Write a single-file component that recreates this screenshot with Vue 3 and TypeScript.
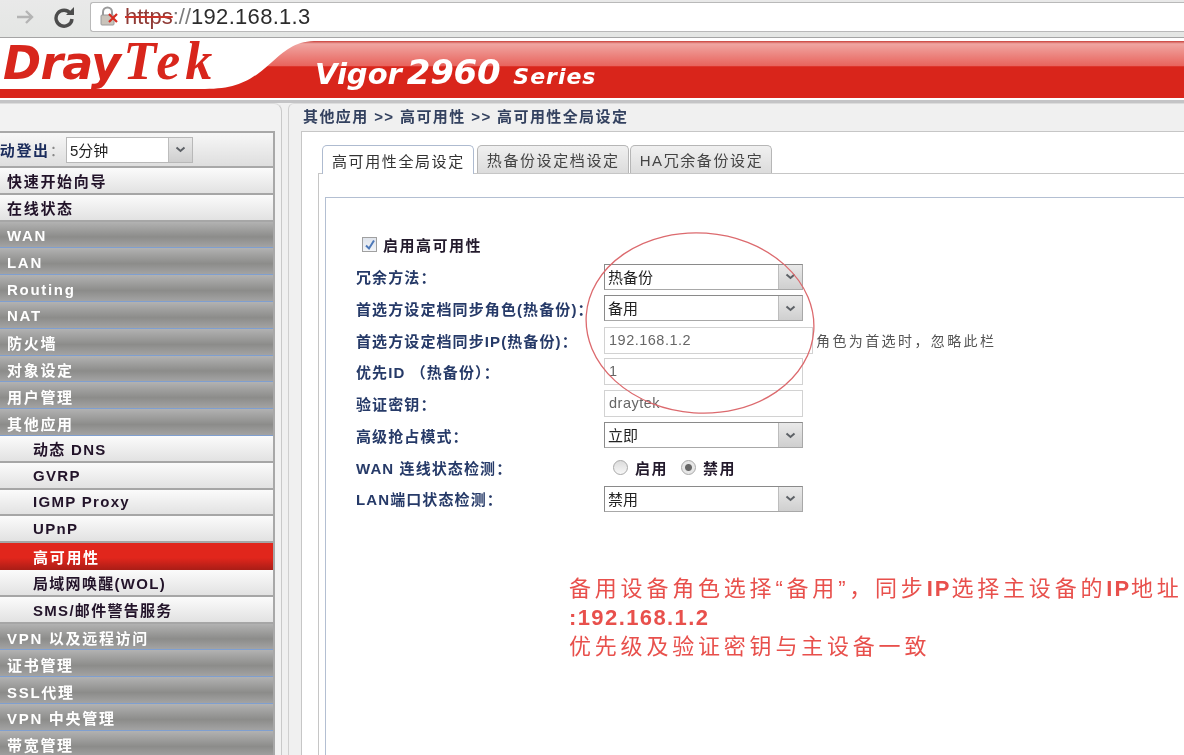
<script setup lang="ts">
interface MenuItem {
  label: string
  kind: 'light' | 'group' | 'sub' | 'active'
}

interface FormRow {
  label: string
  type: 'select' | 'input' | 'radio'
  value?: string
  wide?: boolean
  note?: string
}

const menu: MenuItem[] = [
  { label: '快速开始向导', kind: 'light' },
  { label: '在线状态', kind: 'light' },
  { label: 'WAN', kind: 'group' },
  { label: 'LAN', kind: 'group' },
  { label: 'Routing', kind: 'group' },
  { label: 'NAT', kind: 'group' },
  { label: '防火墙', kind: 'group' },
  { label: '对象设定', kind: 'group' },
  { label: '用户管理', kind: 'group' },
  { label: '其他应用', kind: 'group' },
  { label: '动态 DNS', kind: 'sub' },
  { label: 'GVRP', kind: 'sub' },
  { label: 'IGMP Proxy', kind: 'sub' },
  { label: 'UPnP', kind: 'sub' },
  { label: '高可用性', kind: 'active' },
  { label: '局域网唤醒(WOL)', kind: 'sub' },
  { label: 'SMS/邮件警告服务', kind: 'sub' },
  { label: 'VPN 以及远程访问', kind: 'group' },
  { label: '证书管理', kind: 'group' },
  { label: 'SSL代理', kind: 'group' },
  { label: 'VPN 中央管理', kind: 'group' },
  { label: '带宽管理', kind: 'group' }
]

const tabs = ['高可用性全局设定', '热备份设定档设定', 'HA冗余备份设定']

const rows: FormRow[] = [
  { label: '冗余方法：', type: 'select', value: '热备份' },
  { label: '首选方设定档同步角色(热备份)：', type: 'select', value: '备用' },
  { label: '首选方设定档同步IP(热备份)：', type: 'input', value: '192.168.1.2', wide: true, note: '角色为首选时，忽略此栏' },
  { label: '优先ID （热备份）：', type: 'input', value: '1' },
  { label: '验证密钥：', type: 'input', value: 'draytek' },
  { label: '高级抢占模式：', type: 'select', value: '立即' },
  { label: 'WAN 连线状态检测：', type: 'radio' },
  { label: 'LAN端口状态检测：', type: 'select', value: '禁用' }
]
</script>

<template>
  <div class="page">
    <div class="browser-bar">
      <svg class="nav-icon" width="24" height="24" viewBox="0 0 24 24">
        <path d="M4 12h15M13 6l6 6-6 6" fill="none" stroke="#b4b4b4" stroke-width="2.4" />
      </svg>
      <svg class="nav-icon reload" width="24" height="24" viewBox="0 0 24 24">
        <path d="M18.5 8.5A8 8 0 1 0 20 14" fill="none" stroke="#4c4c4c" stroke-width="3.4" />
        <path d="M14 10h8V2z" fill="#4c4c4c" />
      </svg>
      <div class="address">
        <svg class="lock" width="24" height="22" viewBox="0 0 24 22">
          <path d="M3 9V6a4.500 4.500 0 0 1 9 0v3" fill="none" stroke="#9a9a9a" stroke-width="2" />
          <rect x="1" y="9" width="13" height="10" rx="1" fill="#c9c3ba" stroke="#9a9a9a" />
          <path d="M9 8l8 8M17 8l-8 8" stroke="#d62b20" stroke-width="2.200" />
        </svg>
        <span class="scheme">https</span><span class="url-rest">://</span><span class="url-host">192.168.1.3</span>
      </div>
    </div>

    <header class="banner">
      <svg class="banner-shape" width="1184" height="62" viewBox="0 0 1184 62" preserveAspectRatio="none">
        <defs>
          <linearGradient id="gloss" x1="0" y1="0" x2="0" y2="1" gradientUnits="objectBoundingBox">
            <stop offset="0" stop-color="#c8403a" />
            <stop offset="0.05" stop-color="#f0a6a2" />
            <stop offset="0.44" stop-color="#e8635c" />
            <stop offset="0.45" stop-color="#d9251b" />
            <stop offset="1" stop-color="#d9251b" />
          </linearGradient>
        </defs>
        <path d="M318 3C296 3 288 10 272 24C252 42 238 51 205 51H0V60H1184V3Z" fill="url(#gloss)" />
      </svg>
      <div class="logo"><span class="dray">Dray</span><span class="tek">Tek</span></div>
      <div class="model"><span class="vigor">Vigor</span><span class="number">2960</span><span class="series">Series</span></div>
    </header>

    <div class="workspace">
      <aside class="sidebar">
        <nav class="menu">
          <div class="logout">
            <span class="logout-label">自动登出<i>：</i></span>
            <div class="select logout-select">
              <span class="select-value">5分钟</span>
              <span class="select-arrow">
                <svg width="11" height="7" viewBox="0 0 11 7"><path d="M1.500 1.500l4 3.500 4-3.500" fill="none" stroke="#5d6166" stroke-width="2" /></svg>
              </span>
            </div>
          </div>
          <div v-for="item in menu" :key="item.label" class="menu-item" :class="item.kind">{{ item.label }}</div>
        </nav>
      </aside>

      <main class="main">
        <div class="crumb">其他应用 &gt;&gt; 高可用性 &gt;&gt; 高可用性全局设定</div>
        <div class="sheet">
          <div class="tabs">
            <div v-for="(tab, i) in tabs" :key="tab" class="tab" :class="{ current: i === 0 }">{{ tab }}</div>
          </div>
          <div class="tab-panel">
            <div class="form-box">
              <div class="form">
                <label class="enable">
                  <span class="checkbox">
                    <svg width="12" height="12" viewBox="0 0 12 12"><path d="M2 6.500l3 3 5-8" fill="none" stroke="#4d78b8" stroke-width="2" /></svg>
                  </span>
                  启用高可用性
                </label>
                <template v-for="row in rows" :key="row.label">
                  <div class="field-label">{{ row.label }}</div>
                  <div class="field">
                    <div v-if="row.type === 'select'" class="select">
                      <span class="select-value">{{ row.value }}</span>
                      <span class="select-arrow">
                        <svg width="11" height="7" viewBox="0 0 11 7"><path d="M1.500 1.500l4 3.500 4-3.500" fill="none" stroke="#5d6166" stroke-width="2" /></svg>
                      </span>
                    </div>
                    <div v-else-if="row.type === 'input'" class="text-input" :class="{ wide: row.wide }">{{ row.value }}</div>
                    <div v-else class="radios">
                      <span class="radio"></span><b>启用</b>
                      <span class="radio on"></span><b>禁用</b>
                    </div>
                    <span v-if="row.note" class="note">{{ row.note }}</span>
                  </div>
                </template>
              </div>
              <div class="remark">
                <p>备用设备角色选择“备用”，同步<b>IP</b>选择主设备的<b>IP</b>地址</p>
                <p class="remark-ip">:192.168.1.2</p>
                <p>优先级及验证密钥与主设备一致</p>
              </div>
            </div>
          </div>
        </div>
      </main>
    </div>

    <svg class="circle-mark" width="240" height="192" viewBox="0 0 240 192">
      <ellipse cx="120" cy="96" rx="114" ry="90" fill="none" stroke="#dc6a6e" stroke-width="1.300" transform="rotate(4 120 96)" />
    </svg>
  </div>
</template>

<style>
html,
body {
  margin: 0;
  overflow: hidden;
  background: #f0f0f0;
}
</style>

<style scoped>
.page {
  position: relative;
  width: 1184px;
  height: 755px;
  overflow: hidden;
  display: flex;
  flex-direction: column;
  background: #f0f0f0;
  color: #222;
  font-family: "Liberation Sans", "Noto Sans CJK SC", sans-serif;
  filter: blur(0.35px);
}

.browser-bar {
  height: 38px;
  flex: none;
  box-sizing: border-box;
  display: flex;
  align-items: flex-start;
  padding-top: 2px;
  background: linear-gradient(#e9e9e9, #e4e6e4);
  border-bottom: 1px solid #a5a5a5;
}

.nav-icon {
  margin: 3px 0 0 13px;
  flex: none;
}

.nav-icon.reload {
  margin-left: 15px;
}

.address {
  flex: 1;
  height: 30px;
  margin-left: 14px;
  box-sizing: border-box;
  display: flex;
  align-items: center;
  padding-left: 9px;
  background: #fff;
  border: 1px solid #b9b9b9;
  border-right: 0;
  border-radius: 3px 0 0 3px;
  font-size: 22px;
}

.lock {
  flex: none;
  margin-right: 1px;
}

.scheme {
  color: #8f3a35;
  text-decoration: line-through;
  text-decoration-color: #c9352c;
}

.url-rest {
  color: #7c7c7c;
}

.url-host {
  color: #2c2c2c;
  letter-spacing: 0.3px;
}

.banner {
  position: relative;
  height: 62px;
  flex: none;
  background: #fff;
  border-bottom: 3px solid #c4c4c6;
  box-sizing: content-box;
}

.banner-shape {
  position: absolute;
  left: 0;
  top: 0;
}

.logo {
  position: absolute;
  left: 3px;
  top: -2px;
  line-height: 50px;
  white-space: nowrap;
  color: #d8261c;
}

.dray {
  font-family: "DejaVu Sans", sans-serif;
  font-weight: 700;
  font-style: italic;
  font-size: 46px;
  letter-spacing: -0.8px;
}

.tek {
  margin-left: 3px;
  font-family: "Liberation Serif", serif;
  font-style: italic;
  font-weight: 700;
  font-size: 54px;
  letter-spacing: 5px;
}

.model {
  position: absolute;
  left: 315px;
  top: 14px;
  display: flex;
  align-items: baseline;
  color: #fff;
  font-family: "DejaVu Sans", sans-serif;
  font-weight: 700;
  font-style: italic;
  white-space: nowrap;
}

.vigor {
  font-size: 29px;
}

.number {
  margin-left: 5px;
  font-size: 34px;
  letter-spacing: -0.3px;
}

.series {
  margin-left: 13px;
  font-size: 22px;
  letter-spacing: 1px;
}

.workspace {
  flex: 1;
  min-height: 0;
  display: flex;
}

.sidebar {
  width: 282px;
  flex: none;
  box-sizing: border-box;
  padding-top: 27px;
  overflow: hidden;
  background: #f2f2f2;
  border-right: 1px solid #c9c9c9;
  border-top: 1px solid #dcdcdc;
  border-top-right-radius: 8px;
}

.menu {
  width: 275px;
  box-sizing: border-box;
  border-right: 2px solid #a8a8a8;
  border-top: 2px solid #a8a8a8;
}

.logout {
  height: 35px;
  box-sizing: border-box;
  display: flex;
  align-items: center;
  border-bottom: 2px solid #a8a8a8;
  background: linear-gradient(#f7f7f7, #dedede);
}

.logout-label {
  margin-left: -17px;
  width: 83px;
  flex: none;
  font-size: 15px;
  font-weight: 700;
  letter-spacing: 1.7px;
  color: #1b2c5c;
  white-space: nowrap;
}

.logout-label i {
  font-style: normal;
  font-weight: 400;
  color: #888;
}

.menu-item {
  height: 26.8px;
  box-sizing: border-box;
  padding-left: 7px;
  display: flex;
  align-items: center;
  font-size: 15px;
  font-weight: 700;
  letter-spacing: 1.7px;
  white-space: nowrap;
}

.menu-item.light,
.menu-item.sub {
  color: #221329;
  background: linear-gradient(#fbfbfb, #e2e2e2);
  border-bottom: 2px solid #a6a6a6;
}

.menu-item.sub {
  padding-left: 33px;
  letter-spacing: 1.3px;
}

.menu-item.group {
  padding-top: 2px;
  color: #fff;
  background: linear-gradient(#b2b2b2, #8c8c8a 60%, #a3a3a3);
  border-bottom: 1px solid #7f9fd0;
}

.menu-item.active {
  padding-left: 33px;
  color: #fff;
  background: linear-gradient(#e1261c 55%, #a91d16);
}

.main {
  flex: 1;
  min-width: 0;
  margin-left: 6px;
  box-sizing: border-box;
  display: flex;
  flex-direction: column;
  background: #f0f0f0;
  border-left: 1px solid #cfcfcf;
  border-top: 1px solid #dcdcdc;
  border-top-left-radius: 6px;
}

.crumb {
  height: 27px;
  flex: none;
  box-sizing: border-box;
  padding: 0 0 4px 14px;
  display: flex;
  align-items: center;
  font-size: 15px;
  font-weight: 700;
  color: #33415f;
  letter-spacing: 1.4px;
  white-space: nowrap;
}

.sheet {
  flex: 1;
  margin-left: 12px;
  display: flex;
  flex-direction: column;
  padding: 12px 0 0 16px;
  background: #fff;
  border-left: 1px solid #c6c6c6;
  border-top: 1px solid #c6c6c6;
}

.tabs {
  height: 29px;
  flex: none;
  display: flex;
  align-items: flex-end;
  gap: 1px;
  margin-left: 4px;
}

.tab {
  height: 28px;
  box-sizing: border-box;
  padding: 0 8px 0 9px;
  display: flex;
  align-items: center;
  border: 1px solid #b6b6b6;
  border-bottom: 0;
  border-radius: 5px 5px 0 0;
  background: linear-gradient(#f0f0f0, #dcdcdc);
  font-size: 15px;
  letter-spacing: 1.6px;
  color: #444;
  white-space: nowrap;
}

.tab:nth-child(2) {
  margin-left: 2px;
}

.tab:first-child {
  height: 29px;
  position: relative;
  top: 1px;
  background: #fff;
  border-color: #aebbd0;
  color: #333;
}

.tab-panel {
  flex: 1;
  padding: 23px 0 0 6px;
  border-left: 1px solid #c6c6c6;
  border-top: 1px solid #c6c6c6;
}

.form-box {
  height: 100%;
  box-sizing: border-box;
  padding: 31px 0 0 30px;
  border-left: 1px solid #b3bfd2;
  border-top: 1px solid #b3bfd2;
}

.form {
  display: grid;
  grid-template-columns: 248px 1fr;
  grid-auto-rows: 31.75px;
  align-items: center;
}

.enable {
  grid-column: 1 / 3;
  display: flex;
  align-items: center;
  gap: 6px;
  padding-left: 6px;
  font-size: 15px;
  font-weight: 700;
  letter-spacing: 1.5px;
  color: #231a2c;
}

.checkbox {
  width: 15px;
  height: 15px;
  box-sizing: border-box;
  display: flex;
  align-items: center;
  justify-content: center;
  border: 1px solid #a0a0a0;
  background: linear-gradient(#dfe4ec, #f3f5f8);
}

.field-label {
  font-size: 15px;
  font-weight: 700;
  color: #263a68;
  letter-spacing: 1.1px;
  white-space: nowrap;
}

.field {
  display: flex;
  align-items: center;
}

.select {
  width: 199px;
  height: 26px;
  box-sizing: border-box;
  display: flex;
  background: #fff;
  border: 1px solid #a8a8a8;
  border-top-color: #8a8a8a;
  border-left-color: #8a8a8a;
}

.logout-select {
  width: 127px;
  height: 26px;
  border-color: #b8b8b8;
}

.select-value {
  flex: 1;
  padding-left: 3px;
  line-height: 25px;
  font-size: 15px;
  color: #222;
}

.select-arrow {
  width: 23px;
  flex: none;
  display: flex;
  align-items: center;
  justify-content: center;
  background: linear-gradient(#e9e9e9, #cfcfcf);
  border-left: 1px solid #bdbdbd;
}

.text-input {
  width: 199px;
  height: 27px;
  box-sizing: border-box;
  padding-left: 4px;
  line-height: 25px;
  background: #fff;
  border: 1px solid #d2d2d2;
  font-size: 14.500px;
  letter-spacing: 0.5px;
  color: #666;
}

.text-input.wide {
  width: 209px;
}

.note {
  margin-left: 3px;
  font-size: 14px;
  letter-spacing: 2.400px;
  color: #555;
  white-space: nowrap;
}

.radios {
  display: flex;
  align-items: center;
  padding-left: 9px;
  font-size: 15px;
  letter-spacing: 1.5px;
  color: #231a2c;
}

.radio {
  width: 15px;
  height: 15px;
  box-sizing: border-box;
  margin-right: 7px;
  border: 1px solid #a8a8a8;
  border-radius: 50%;
  background: linear-gradient(#dcdcdc, #f7f7f7);
}

.radio.on {
  margin-left: 13px;
  background: radial-gradient(circle, #666 0 3px, #e6e6e6 4px);
}

.remark {
  margin: 59px 0 0 213px;
  font-size: 22px;
  line-height: 29px;
  letter-spacing: 3.800px;
  color: #e8504c;
  white-space: nowrap;
}

.remark p {
  margin: 0;
}

.remark b {
  letter-spacing: 2px;
}

.remark-ip {
  font-weight: 700;
  letter-spacing: 1.400px;
}

.circle-mark {
  position: absolute;
  left: 580px;
  top: 227px;
}
</style>
